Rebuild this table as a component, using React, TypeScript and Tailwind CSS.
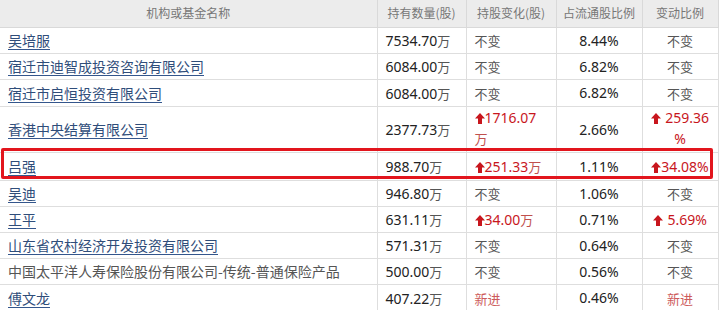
import React from 'react';

type Change = { kind: 'same' } | { kind: 'new' } | { kind: 'up'; value: string; unit: string; wrap?: boolean; space?: boolean };

type Row = {
  name: string;
  link: boolean;
  held: string;
  change: Change;
  ratio: string;
  delta: Change;
  h: string;
};

const rows: Row[] = [
  { name: '吴培服', link: true, held: '7534.70', change: { kind: 'same' }, ratio: '8.44%', delta: { kind: 'same' }, h: 'h-[26px]' },
  { name: '宿迁市迪智成投资咨询有限公司', link: true, held: '6084.00', change: { kind: 'same' }, ratio: '6.82%', delta: { kind: 'same' }, h: 'h-[26px]' },
  { name: '宿迁市启恒投资有限公司', link: true, held: '6084.00', change: { kind: 'same' }, ratio: '6.82%', delta: { kind: 'same' }, h: 'h-[27px]' },
  { name: '香港中央结算有限公司', link: true, held: '2377.73', change: { kind: 'up', value: '1716.07', unit: '万', wrap: true }, ratio: '2.66%', delta: { kind: 'up', value: '259.36', unit: '%', wrap: true, space: true }, h: 'h-[46px]' },
  { name: '吕强', link: true, held: '988.70', change: { kind: 'up', value: '251.33', unit: '万' }, ratio: '1.11%', delta: { kind: 'up', value: '34.08', unit: '%' }, h: 'h-[28px]' },
  { name: '吴迪', link: true, held: '946.80', change: { kind: 'same' }, ratio: '1.06%', delta: { kind: 'same' }, h: 'h-[26px]' },
  { name: '王平', link: true, held: '631.11', change: { kind: 'up', value: '34.00', unit: '万' }, ratio: '0.71%', delta: { kind: 'up', value: '5.69', unit: '%', space: true }, h: 'h-[26px]' },
  { name: '山东省农村经济开发投资有限公司', link: true, held: '571.31', change: { kind: 'same' }, ratio: '0.64%', delta: { kind: 'same' }, h: 'h-[26px]' },
  { name: '中国太平洋人寿保险股份有限公司-传统-普通保险产品', link: false, held: '500.00', change: { kind: 'same' }, ratio: '0.56%', delta: { kind: 'same' }, h: 'h-[26px]' },
  { name: '傅文龙', link: true, held: '407.22', change: { kind: 'new' }, ratio: '0.46%', delta: { kind: 'new' }, h: 'h-[27px]' },
];

const cjk = "font-['Noto_Sans_CJK_SC',sans-serif]";
const num = "font-['Noto_Sans','Noto_Sans_CJK_SC',sans-serif]";

const UpArrow = () => (
  <svg width="10" height="11" viewBox="0 0 10 11" className="inline-block align-[-1px]">
    <polygon points="5,0 10,5.5 7,5.5 7,11 3,11 3,5.5 0,5.5" fill="#c8161d" />
  </svg>
);

const ChangeCell = ({ c }: { c: Change }) => {
  if (c.kind === 'same') return <span className={`${cjk} text-[13px] text-[#555]`}>不变</span>;
  if (c.kind === 'new') return <span className={`${cjk} text-[13px] text-[#cd5b5b]`}>新进</span>;
  const unitCls = c.unit === '万' ? `${cjk} text-[13px] text-[#c0504d]` : `${num} text-[14px] text-[#c8161d]`;
  return (
    <div className={c.wrap ? 'leading-[20px] -mt-[3px]' : 'leading-[22px]'}>
      <UpArrow />
      {c.space && ' '}
      <span className={`${num} text-[14px] text-[#c8161d]`}>{c.value}</span>
      {c.wrap && <br />}
      <span className={unitCls}>{c.unit}</span>
    </div>
  );
};

export default function App() {
  return (
    <div className="relative w-[719px] h-[310px] overflow-hidden bg-white">
      <table className="w-[718px] table-fixed border-collapse">
        <colgroup>
          <col className="w-[377px]" />
          <col className="w-[89px]" />
          <col className="w-[90px]" />
          <col className="w-[86px]" />
          <col className="w-[76px]" />
        </colgroup>
        <thead>
          <tr className={`h-[27px] bg-[#ececec] ${cjk} text-[12px] text-[#777] font-normal`}>
            <th className="font-normal border-b border-[#d9d9d9]">机构或基金名称</th>
            <th className="font-normal border-b border-l border-[#d9d9d9]">持有数量(股)</th>
            <th className="font-normal border-b border-l border-[#d9d9d9]">持股变化(股)</th>
            <th className="font-normal border-b border-l border-[#d9d9d9]">占流通股比例</th>
            <th className="font-normal border-b border-x border-[#d9d9d9]">变动比例</th>
          </tr>
        </thead>
        <tbody>
          {rows.map((r) => (
            <tr key={r.name} className={r.h}>
              <td className="border-b border-[#dedede] pl-2 p-0 align-middle">
                {r.link ? (
                  <a className={`${cjk} text-[14px] text-[#2f4d7a] underline decoration-[#34568c] underline-offset-[3px]`}>{r.name}</a>
                ) : (
                  <span className={`${cjk} text-[14px] text-[#555]`}>{r.name}</span>
                )}
              </td>
              <td className="border-b border-l border-[#dedede] pl-2 align-middle whitespace-nowrap">
                <span className={`${num} text-[14px] text-[#222]`}>{r.held}</span>
                <span className={`${cjk} text-[13px] text-[#555]`}>万</span>
              </td>
              <td className="border-b border-l border-[#dedede] pl-2 align-middle whitespace-nowrap">
                <ChangeCell c={r.change} />
              </td>
              <td className={`border-b border-l border-[#dedede] text-center align-middle ${num} text-[14px] text-[#222]`}>{r.ratio}</td>
              <td className="border-b border-x border-[#dedede] text-center align-middle whitespace-nowrap">
                <ChangeCell c={r.delta} />
              </td>
            </tr>
          ))}
        </tbody>
      </table>
      <div className="absolute left-[1px] top-[148px] w-[712px] h-[31px] border-[3px] border-[#e2151d] rounded-[2px] pointer-events-none" />
    </div>
  );
}
